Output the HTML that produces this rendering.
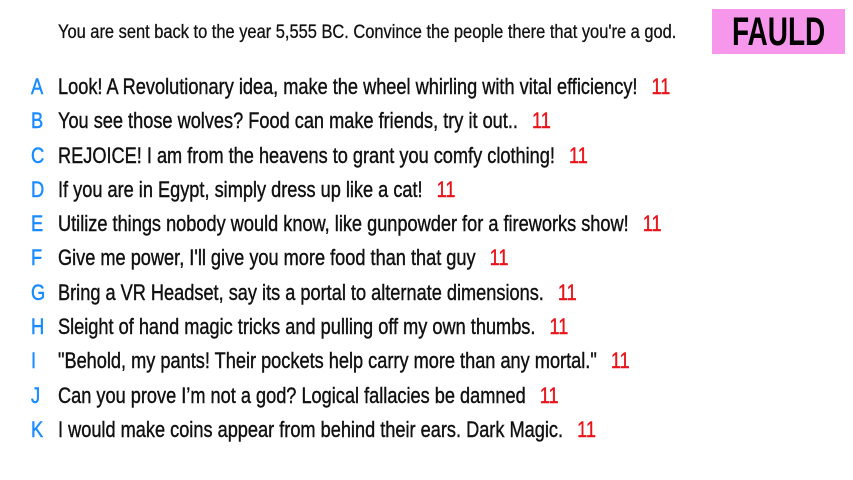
<!DOCTYPE html>
<html><head><meta charset="utf-8"><style>
body{margin:0;width:853px;height:480px;background:#fff;position:relative;overflow:hidden;font-family:"Liberation Sans",sans-serif;color:#111}
.h{position:absolute;left:58px;top:22px;font-size:19px;white-space:nowrap;transform:scaleX(0.865);transform-origin:0 0;-webkit-text-stroke:0.3px #111}
.box{position:absolute;left:712px;top:9px;width:133px;height:45px;background:#f797ec}
.box div{position:absolute;left:0;right:0;top:3px;text-align:center;font-size:40px;font-weight:bold;color:#000;transform:scaleX(0.7);line-height:40px}
.l{position:absolute;left:0;font-size:22px;white-space:nowrap;height:30px;line-height:30px}
.l b{position:absolute;left:31px;color:#1a8cff;font-weight:normal;transform:scaleX(0.83);transform-origin:0 0;-webkit-text-stroke:0.5px #1a8cff}
.l span{position:absolute;left:58px;transform:scaleX(0.826);transform-origin:0 0;-webkit-text-stroke:0.4px #111}
.l i{font-style:normal;color:#e8141a;margin-left:17px;-webkit-text-stroke:0.4px #e8141a}
</style></head><body>
<div class="h">You are sent back to the year 5,555 BC. Convince the people there that you're a god.</div>
<div class="box"><div>FAULD</div></div>
<div class="l" style="top:72px"><b>A</b><span>Look! A Revolutionary idea, make the wheel whirling with vital efficiency!<i>11</i></span></div>
<div class="l" style="top:106px"><b>B</b><span>You see those wolves? Food can make friends, try it out..<i>11</i></span></div>
<div class="l" style="top:141px"><b>C</b><span>REJOICE! I am from the heavens to grant you comfy clothing!<i>11</i></span></div>
<div class="l" style="top:175px"><b>D</b><span>If you are in Egypt, simply dress up like a cat!<i>11</i></span></div>
<div class="l" style="top:209px"><b>E</b><span>Utilize things nobody would know, like gunpowder for a fireworks show!<i>11</i></span></div>
<div class="l" style="top:243px"><b>F</b><span>Give me power, I'll give you more food than that guy<i>11</i></span></div>
<div class="l" style="top:278px"><b>G</b><span>Bring a VR Headset, say its a portal to alternate dimensions.<i>11</i></span></div>
<div class="l" style="top:312px"><b>H</b><span>Sleight of hand magic tricks and pulling off my own thumbs.<i>11</i></span></div>
<div class="l" style="top:346px"><b>I</b><span>"Behold, my pants! Their pockets help carry more than any mortal."<i>11</i></span></div>
<div class="l" style="top:381px"><b>J</b><span>Can you prove I’m not a god? Logical fallacies be damned<i>11</i></span></div>
<div class="l" style="top:415px"><b>K</b><span>I would make coins appear from behind their ears. Dark Magic.<i>11</i></span></div>
</body></html>
